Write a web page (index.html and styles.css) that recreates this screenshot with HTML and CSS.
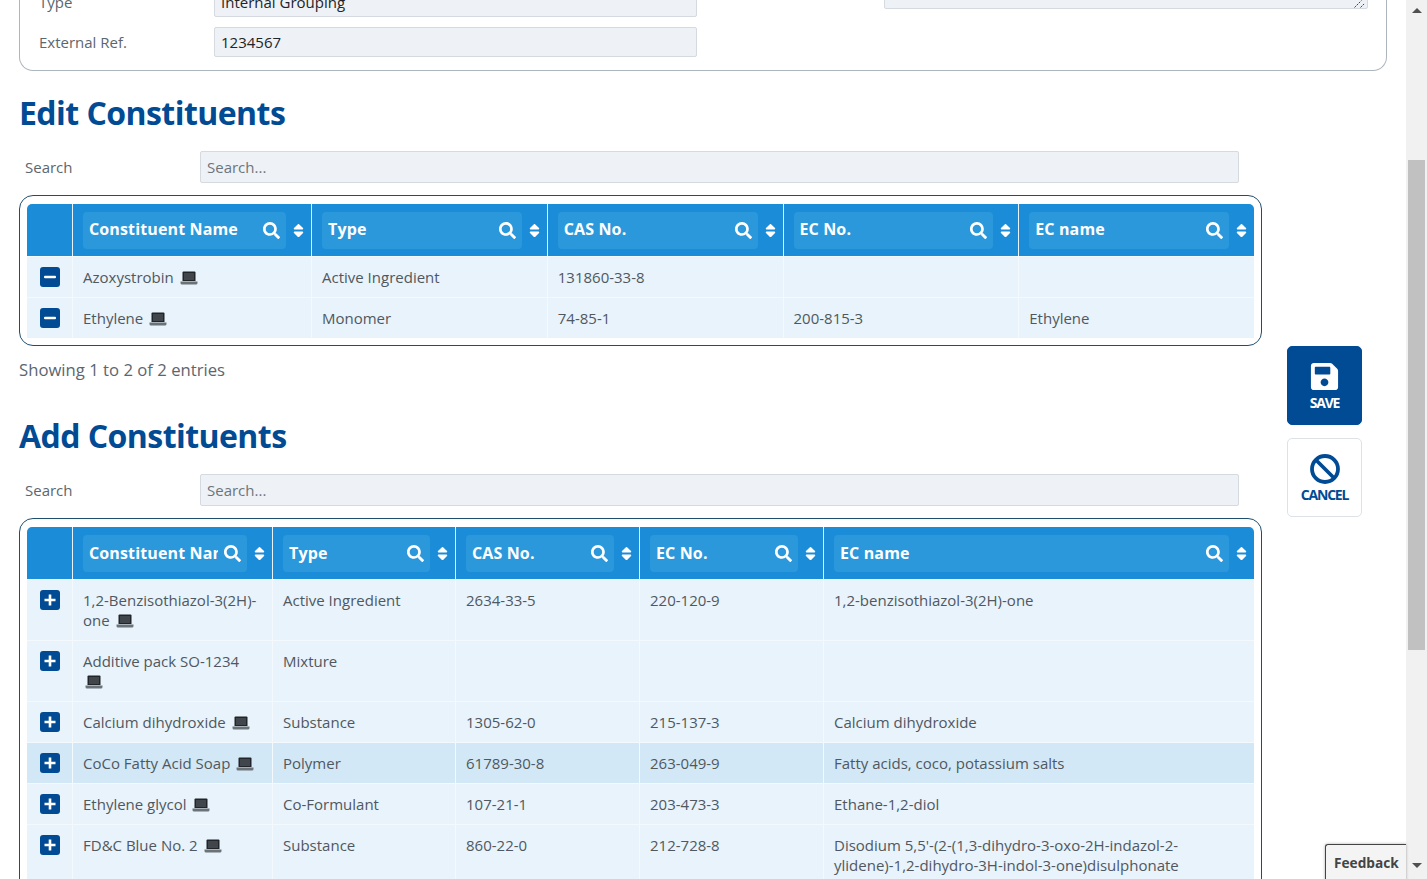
FILE: index.html
```html
<!DOCTYPE html>
<html lang="en">
<head>
  <meta charset="UTF-8">
  <title>Edit Constituents</title>
  <link rel="stylesheet" href="styles.css">
</head>
<body>

<svg class="defs" width="0" height="0">
  <symbol id="i-search" viewBox="0 0 512 512"><path d="M505 442.7L405.3 343c-4.5-4.5-10.6-7-17-7H372c27.6-35.3 44-79.7 44-128C416 93.1 322.9 0 208 0S0 93.1 0 208s93.1 208 208 208c48.3 0 92.7-16.4 128-44v16.3c0 6.4 2.5 12.5 7 17l99.7 99.7c9.4 9.4 24.6 9.4 33.9 0l28.3-28.3c9.4-9.4 9.4-24.6.1-34zM208 336c-70.7 0-128-57.2-128-128 0-70.7 57.2-128 128-128 70.7 0 128 57.2 128 128 0 70.7-57.2 128-128 128z"/></symbol>
  <symbol id="i-sort" viewBox="0 0 320 512"><path d="M41 288h238c21.4 0 32.1 25.9 17 41L177 448c-9.4 9.4-24.6 9.4-33.9 0L24 329c-15.1-15.1-4.4-41 17-41zm255-105L177 64c-9.4-9.4-24.6-9.4-33.9 0L24 183c-15.1 15.1-4.4 41 17 41h238c21.4 0 32.1-25.9 17-41z"/></symbol>
  <symbol id="i-laptop" viewBox="0 0 18 14"><path d="M3.500 0.500h11a1 1 0 0 1 1 1v8.500h-13V1.500a1 1 0 0 1 1-1z" fill="#212529"/><rect x="4" y="2" width="10" height="7" fill="#40464b"/><path d="M0.500 10.500h17v1.500a1.500 1.500 0 0 1-1.500 1.500H2A1.500 1.500 0 0 1 0.500 12z" fill="#6c7378"/></symbol>
  <symbol id="i-minus" viewBox="0 0 20 20"><rect width="20" height="20" rx="3" fill="#004b93"/><rect x="4" y="8.700" width="12" height="2.600" rx="1" fill="#fff"/></symbol>
  <symbol id="i-plus" viewBox="0 0 20 20"><rect width="20" height="20" rx="3" fill="#004b93"/><path d="M4.500 8.700h4.200V4.500h2.600v4.200h4.200v2.600h-4.200v4.200H8.700v-4.200H4.500z" fill="#fff"/></symbol>
</svg>

<div class="window">
  <div class="page">

    <div class="details">
      <div class="details-left">
        <div class="field"><label>Type</label><input type="text" value="Internal Grouping" readonly></div>
        <div class="field"><label>External Ref.</label><input type="text" value="1234567" readonly></div>
      </div>
      <div class="details-right">
        <div class="textarea-wrap">
          <textarea readonly></textarea>
          <svg class="grip" viewBox="0 0 11 8"><path d="M0.500 7.500L7.500 0.500M6.500 7.500L10.500 3.500" stroke="#444" fill="none" stroke-dasharray="2 1"/></svg>
        </div>
      </div>
    </div>

    <div class="main">
      <div class="tables">

        <h2>Edit Constituents</h2>
        <div class="search-row"><label>Search</label><input type="text" placeholder="Search..."></div>
        <div class="table-card">
          <table class="edit-table">
            <colgroup><col class="c-btn"><col class="c-name"><col><col><col><col></colgroup>
            <thead>
              <tr>
                <th></th>
                <th><div class="th-inner"><div class="filter"><span>Constituent Name</span><svg><use href="#i-search"/></svg></div><svg class="sort"><use href="#i-sort"/></svg></div></th>
                <th><div class="th-inner"><div class="filter"><span>Type</span><svg><use href="#i-search"/></svg></div><svg class="sort"><use href="#i-sort"/></svg></div></th>
                <th><div class="th-inner"><div class="filter"><span>CAS No.</span><svg><use href="#i-search"/></svg></div><svg class="sort"><use href="#i-sort"/></svg></div></th>
                <th><div class="th-inner"><div class="filter"><span>EC No.</span><svg><use href="#i-search"/></svg></div><svg class="sort"><use href="#i-sort"/></svg></div></th>
                <th><div class="th-inner"><div class="filter"><span>EC name</span><svg><use href="#i-search"/></svg></div><svg class="sort"><use href="#i-sort"/></svg></div></th>
              </tr>
            </thead>
            <tbody>
              <tr>
                <td class="btn-cell"><svg class="row-btn"><use href="#i-minus"/></svg></td>
                <td>Azoxystrobin <svg class="laptop"><use href="#i-laptop"/></svg></td>
                <td>Active Ingredient</td><td>131860-33-8</td><td></td><td></td>
              </tr>
              <tr>
                <td class="btn-cell"><svg class="row-btn"><use href="#i-minus"/></svg></td>
                <td>Ethylene <svg class="laptop"><use href="#i-laptop"/></svg></td>
                <td>Monomer</td><td>74-85-1</td><td>200-815-3</td><td>Ethylene</td>
              </tr>
            </tbody>
          </table>
        </div>
        <div class="showing">Showing 1 to 2 of 2 entries</div>

        <h2 class="add-title">Add Constituents</h2>
        <div class="search-row"><label>Search</label><input type="text" placeholder="Search..."></div>
        <div class="table-card">
          <table class="add-table">
            <colgroup><col class="c-btn"><col class="c-name"><col class="c-type"><col class="c-mid"><col class="c-mid"><col></colgroup>
            <thead>
              <tr>
                <th></th>
                <th><div class="th-inner"><div class="filter"><span>Constituent Name</span><svg><use href="#i-search"/></svg></div><svg class="sort"><use href="#i-sort"/></svg></div></th>
                <th><div class="th-inner"><div class="filter"><span>Type</span><svg><use href="#i-search"/></svg></div><svg class="sort"><use href="#i-sort"/></svg></div></th>
                <th><div class="th-inner"><div class="filter"><span>CAS No.</span><svg><use href="#i-search"/></svg></div><svg class="sort"><use href="#i-sort"/></svg></div></th>
                <th><div class="th-inner"><div class="filter"><span>EC No.</span><svg><use href="#i-search"/></svg></div><svg class="sort"><use href="#i-sort"/></svg></div></th>
                <th><div class="th-inner"><div class="filter"><span>EC name</span><svg><use href="#i-search"/></svg></div><svg class="sort"><use href="#i-sort"/></svg></div></th>
              </tr>
            </thead>
            <tbody>
              <tr>
                <td class="btn-cell"><svg class="row-btn"><use href="#i-plus"/></svg></td>
                <td>1,2-Benzisothiazol-3(2H)-one <svg class="laptop"><use href="#i-laptop"/></svg></td>
                <td>Active Ingredient</td><td>2634-33-5</td><td>220-120-9</td><td>1,2-benzisothiazol-3(2H)-one</td>
              </tr>
              <tr>
                <td class="btn-cell"><svg class="row-btn"><use href="#i-plus"/></svg></td>
                <td>Additive pack SO-1234 <svg class="laptop"><use href="#i-laptop"/></svg></td>
                <td>Mixture</td><td></td><td></td><td></td>
              </tr>
              <tr>
                <td class="btn-cell"><svg class="row-btn"><use href="#i-plus"/></svg></td>
                <td>Calcium dihydroxide <svg class="laptop"><use href="#i-laptop"/></svg></td>
                <td>Substance</td><td>1305-62-0</td><td>215-137-3</td><td>Calcium dihydroxide</td>
              </tr>
              <tr class="hovered">
                <td class="btn-cell"><svg class="row-btn"><use href="#i-plus"/></svg></td>
                <td>CoCo Fatty Acid Soap <svg class="laptop"><use href="#i-laptop"/></svg></td>
                <td>Polymer</td><td>61789-30-8</td><td>263-049-9</td><td>Fatty acids, coco, potassium salts</td>
              </tr>
              <tr>
                <td class="btn-cell"><svg class="row-btn"><use href="#i-plus"/></svg></td>
                <td>Ethylene glycol <svg class="laptop"><use href="#i-laptop"/></svg></td>
                <td>Co-Formulant</td><td>107-21-1</td><td>203-473-3</td><td>Ethane-1,2-diol</td>
              </tr>
              <tr>
                <td class="btn-cell"><svg class="row-btn"><use href="#i-plus"/></svg></td>
                <td>FD&amp;C Blue No. 2 <svg class="laptop"><use href="#i-laptop"/></svg></td>
                <td>Substance</td><td>860-22-0</td><td>212-728-8</td><td>Disodium 5,5'-(2-(1,3-dihydro-3-oxo-2H-indazol-2-ylidene)-1,2-dihydro-3H-indol-3-one)disulphonate</td>
              </tr>
            </tbody>
          </table>
        </div>
      </div>

      <div class="actions">
        <button class="action save">
          <svg viewBox="0 0 448 512"><path d="M433.941 129.941l-83.882-83.882A48 48 0 0 0 316.118 32H48C21.49 32 0 53.49 0 80v352c0 26.51 21.49 48 48 48h352c26.51 0 48-21.49 48-48V163.882a48 48 0 0 0-14.059-33.941zM224 416c-35.346 0-64-28.654-64-64 0-35.346 28.654-64 64-64s64 28.654 64 64c0 35.346-28.654 64-64 64zm96-304.520V212c0 6.627-5.373 12-12 12H76c-6.627 0-12-5.373-12-12V108c0-6.627 5.373-12 12-12h228.520c3.183 0 6.235 1.264 8.485 3.515l3.480 3.480A11.996 11.996 0 0 1 320 111.480z"/></svg>
          SAVE
        </button>
        <button class="action cancel">
          <svg viewBox="0 0 30 30"><circle cx="15" cy="15" r="13" fill="none" stroke="#004b93" stroke-width="3.800"/><path d="M6 6l18 18" stroke="#004b93" stroke-width="3.800"/></svg>
          CANCEL
        </button>
      </div>
    </div>
  </div>

  <div class="scrollbar">
    <div class="arrow-up"></div>
    <div class="thumb"></div>
    <div class="arrow-down"></div>
  </div>

  <div class="feedback">Feedback</div>
</div>

</body>
</html>
```

FILE: styles.css
```css
* {
  box-sizing: border-box;
}

html, body {
  margin: 0;
  height: 100%;
  overflow: hidden;
}

body {
  font-family: "Open Sans", sans-serif;
  font-size: 15px;
  color: #50585f;
  background: #fff;
}

.defs {
  position: absolute;
}

.window {
  display: flex;
  height: 879px;
  overflow: hidden;
  position: relative;
}

.page {
  width: 1406px;
  padding: 0 19px;
  flex-shrink: 0;
}

/* top card, scrolled partly out of view */
.details {
  display: flex;
  height: 131px;
  margin-top: -60px;
  padding: 0 19px;
  border: 1px solid #adb5bd;
  border-top: 0;
  border-radius: 0 0 14px 14px;
}

.details-left {
  width: 659px;
  padding-top: 47px;
}

.field {
  display: flex;
  align-items: center;
  height: 30px;
  margin-bottom: 10px;
}

.field label {
  width: 175px;
  color: #5c666f;
}

.field input {
  width: 483px;
}

.details-right {
  margin-left: 187px;
  padding-top: 39px;
}

.textarea-wrap {
  position: relative;
  width: 484px;
}

.textarea-wrap textarea {
  display: block;
  width: 484px;
  height: 30px;
  resize: none;
  background: #eef1f5;
  border: 1px solid #d5dae0;
  border-radius: 2px;
}

.grip {
  position: absolute;
  right: 3px;
  bottom: 1px;
  width: 11px;
  height: 8px;
}

input {
  height: 30px;
  padding: 0 6px;
  font: inherit;
  color: #212529;
  background: #eef1f5;
  border: 1px solid #d5dae0;
  border-radius: 2px;
  outline: none;
}

input::placeholder {
  color: #6c757d;
  opacity: 1;
}

.main {
  display: flex;
  gap: 25px;
}

.tables {
  width: 1243px;
}

h2 {
  margin: 22px 0 18px;
  font-size: 32px;
  line-height: 40px;
  font-weight: 700;
  letter-spacing: -0.55px;
  color: #004b93;
}

h2.add-title {
  margin-top: 34px;
}

.search-row {
  display: flex;
  align-items: center;
  margin: 0 23px 12px 6px;
}

.search-row label {
  width: 175px;
  color: #5c666f;
}

.search-row input {
  flex: 1;
  height: 32px;
}

.table-card {
  padding: 8px 7px 7px;
  border: 1px solid #1f4e6e;
  border-radius: 14px;
}

table {
  width: 100%;
  table-layout: fixed;
  border-collapse: separate;
  border-spacing: 0;
}

.c-btn {
  width: 45px;
}

.edit-table .c-name {
  width: 239px;
}

.add-table .c-name {
  width: 200px;
}

.add-table .c-type {
  width: 183px;
}

.add-table .c-mid {
  width: 184px;
}

th {
  height: 52px;
  padding: 7px 7px 7px 10px;
  background: #1a8cd8;
  border-left: 1px solid #e8f3fb;
}

th:first-child {
  border-left: 0;
  border-radius: 5px 0 0 0;
}

th:last-child {
  border-radius: 0 5px 0 0;
}

.th-inner {
  display: flex;
  align-items: center;
  gap: 7px;
}

.filter {
  flex: 1;
  min-width: 0;
  height: 37px;
  display: flex;
  align-items: center;
  gap: 6px;
  padding: 0 6px;
  background: #2b98dc;
  border-radius: 4px;
}

.filter span {
  flex: 1;
  overflow: hidden;
  white-space: nowrap;
  text-align: left;
  font-size: 16px;
  font-weight: 700;
  letter-spacing: 0.13px;
  color: #fff;
}

.edit-table .filter span {
  padding-bottom: 2px;
}

.filter svg {
  width: 17px;
  height: 17px;
  flex-shrink: 0;
  fill: #fff;
}

.sort {
  width: 11px;
  height: 17px;
  flex-shrink: 0;
  fill: #fff;
}

td {
  padding: 10px;
  line-height: 20px;
  vertical-align: top;
  background: #e8f3fb;
  border-left: 1px solid #f4f9fd;
  border-top: 1px solid #f4f9fd;
}

td:first-child {
  border-left: 0;
}

.hovered td {
  background: #d3e8f6;
}

.btn-cell {
  padding-left: 13px;
}

.row-btn {
  display: block;
  width: 20px;
  height: 20px;
}

.laptop {
  width: 18px;
  height: 14px;
  margin-left: 2px;
  vertical-align: -2px;
}

.showing {
  margin-top: 12px;
  font-size: 16.7px;
  line-height: 24px;
  color: #5c666f;
}

.actions {
  display: flex;
  flex-direction: column;
  gap: 13px;
  padding-top: 275px;
}

.action {
  width: 75px;
  height: 79px;
  display: flex;
  flex-direction: column;
  align-items: center;
  padding: 14px 0 0;
  font-family: inherit;
  font-size: 14px;
  line-height: 18px;
  font-weight: 700;
  letter-spacing: -1.2px;
  border-radius: 5px;
}

.action svg {
  width: 31px;
  height: 31px;
  margin-bottom: 2px;
}

.save {
  color: #fff;
  fill: #fff;
  background: #004b93;
  border: 1px solid #004b93;
}

.cancel {
  padding-top: 15px;
  color: #004b93;
  background: #fff;
  border: 1px solid #dee2e6;
}

.cancel svg {
  width: 30px;
  height: 30px;
}

.scrollbar {
  width: 21px;
  height: 879px;
  display: flex;
  flex-direction: column;
  align-items: center;
  background: #f1f1f1;
}

.arrow-up {
  margin-top: 8px;
  border: 5px solid transparent;
  border-top: 0;
  border-bottom-color: #505050;
}

.thumb {
  width: 17px;
  height: 490px;
  margin: 147px 0 213px 0;
  background: #c1c1c1;
}

.arrow-down {
  border: 5px solid transparent;
  border-bottom: 0;
  border-top-color: #505050;
}

.feedback {
  position: absolute;
  left: 1325px;
  top: 844px;
  width: 81px;
  height: 40px;
  padding: 8px 8px;
  font-size: 13.7px;
  font-weight: 700;
  color: #444;
  background: #f4f4f4;
  border: 1px solid #444;
  border-right: 0;
  border-radius: 3px 0 0 0;
  box-shadow: 0 0 3px rgba(0, 0, 0, 0.35);
}
```
